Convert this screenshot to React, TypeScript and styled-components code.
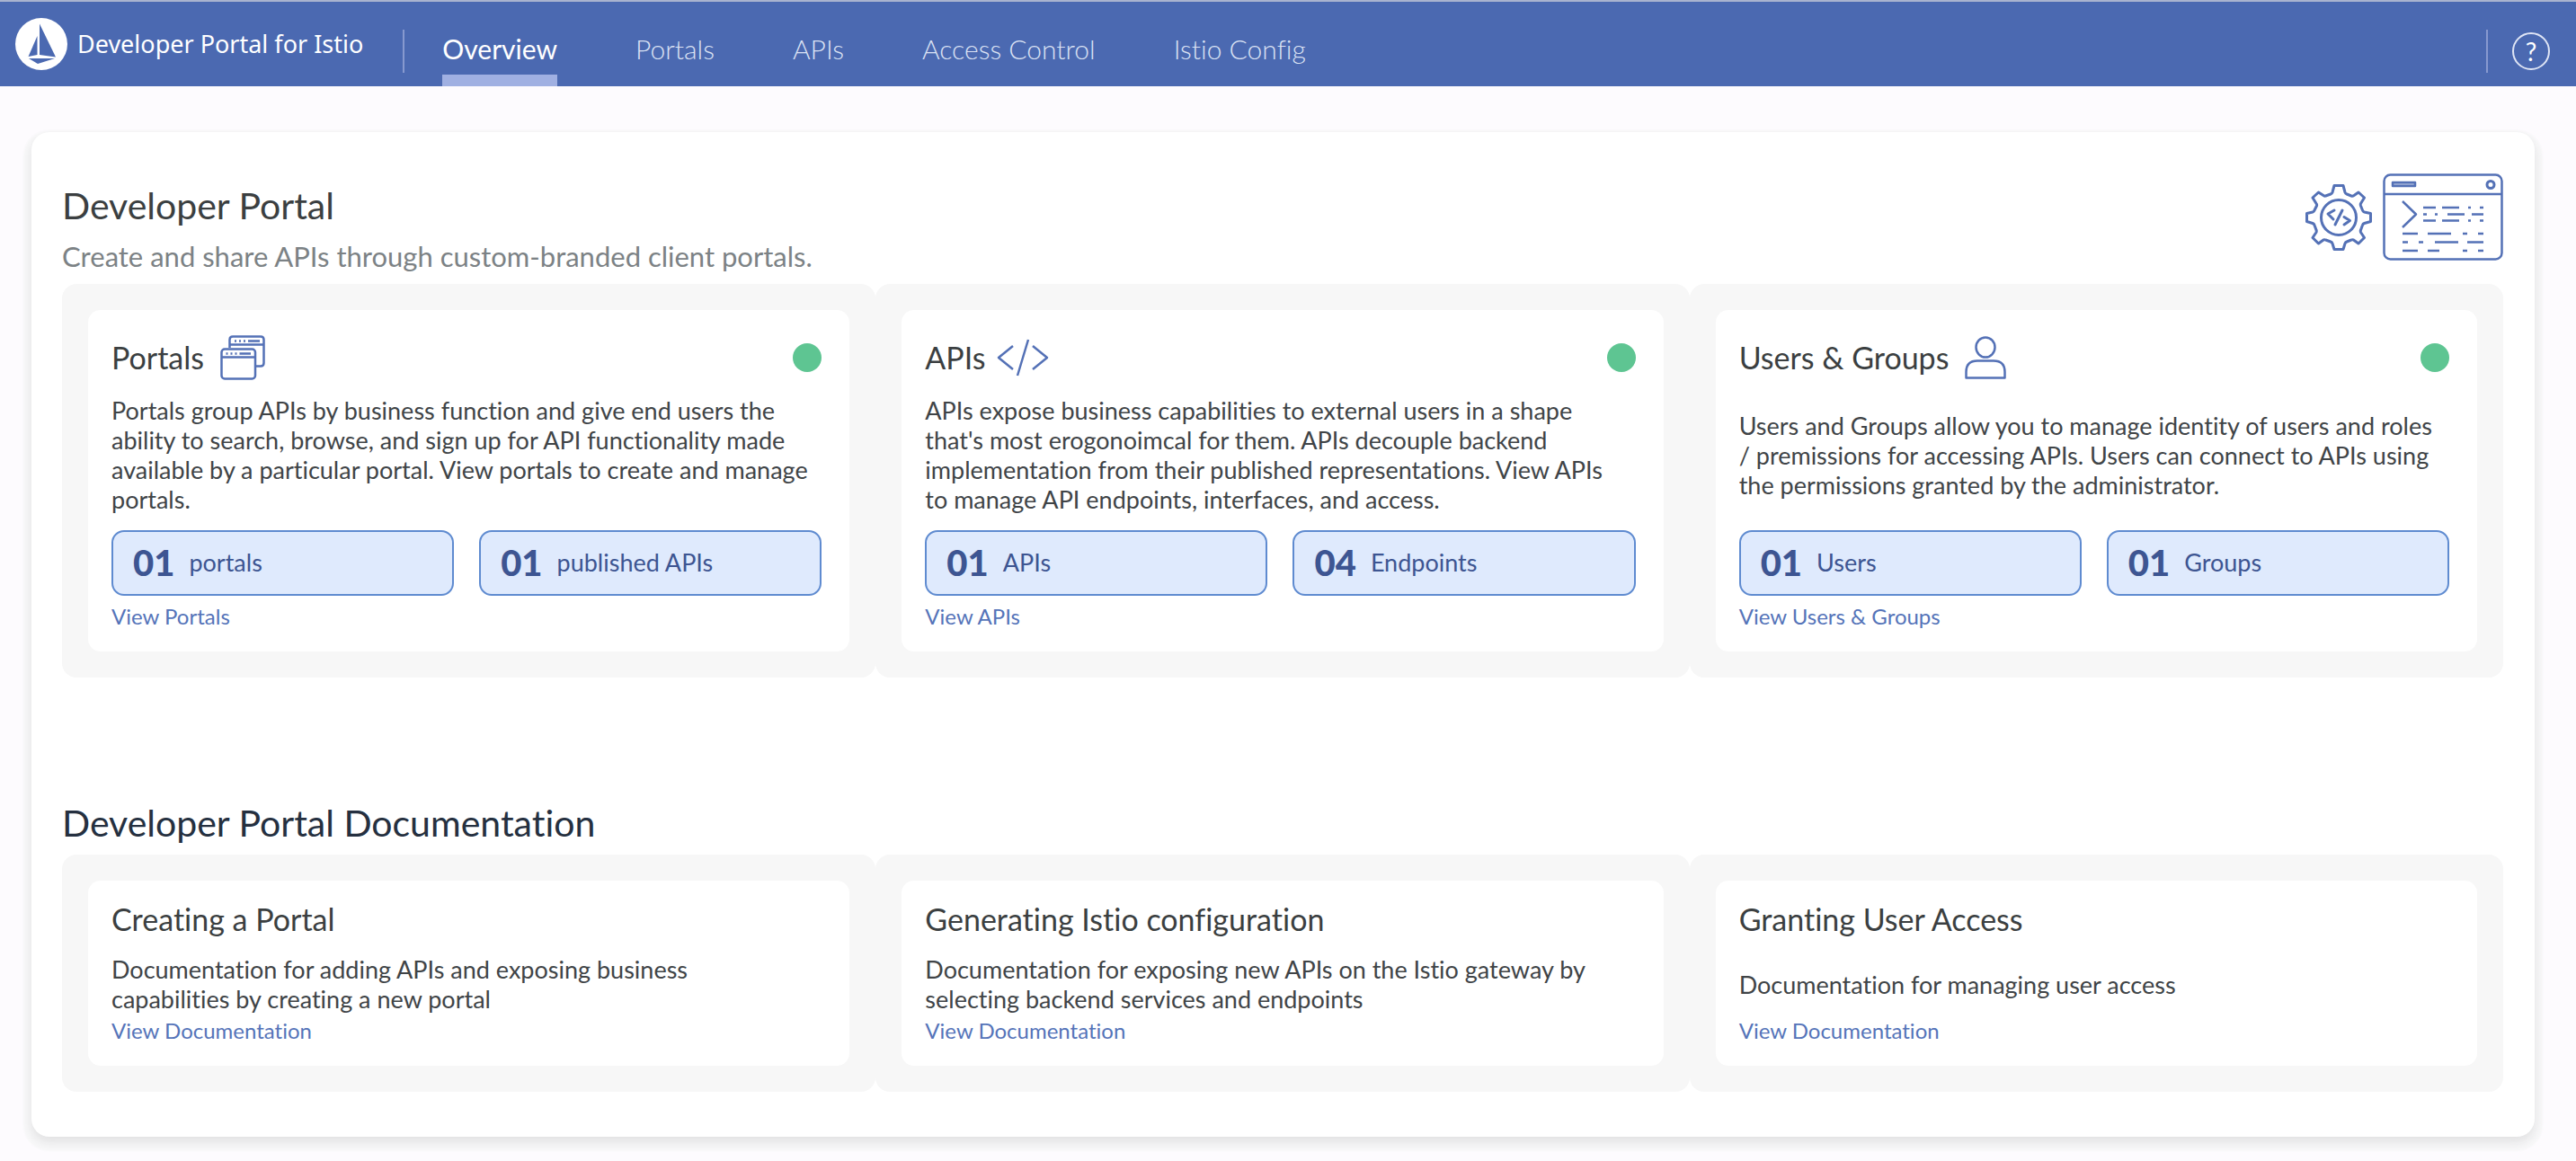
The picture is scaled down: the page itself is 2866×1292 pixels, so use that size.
import React from 'react';
import styled, { createGlobalStyle } from 'styled-components';

const blue = '#4b69b1';
const sans = `Lato, "Open Sans", "Liberation Sans", sans-serif`;

const GlobalStyle = createGlobalStyle`
  *, *::before, *::after { box-sizing: border-box; }
  body {
    margin: 0;
    background: #fdfbfe;
    color: #3b3f41;
    font-family: ${sans};
    font-variant-ligatures: none;
  }
  h1, h2, h3, p, ul { margin: 0; padding: 0; font-weight: 400; }
  ul { list-style: none; }
  a { text-decoration: none; color: inherit; }
`;

const Header = styled.header`
  display: flex;
  align-items: stretch;
  height: 96px;
  padding: 0 29px 0 17px;
  background: ${blue};
  border-top: 2px solid #a9b3cf;
  color: #fff;
`;

const Brand = styled.a`
  display: flex;
  align-items: center;
  gap: 11px;
  padding-right: 44px;
  font-family: "Noto Sans", "Open Sans", sans-serif;
  font-size: 27px;
  line-height: 40px;
  white-space: nowrap;
`;

const Divider = styled.span`
  flex: none;
  align-self: center;
  width: 2px;
  height: 48px;
  margin-top: 16px;
  background: #8799cf;
`;

const Nav = styled.nav`
  flex: 1;
  display: flex;
  gap: 87px;
  padding-left: 42px;
`;

const NavLink = styled.a<{ $active?: boolean }>`
  display: flex;
  align-items: center;
  padding-top: 22px;
  border-bottom: 13px solid ${(p) => (p.$active ? '#a0b0e2' : 'transparent')};
  font-size: 30px;
  line-height: 36px;
  font-weight: ${(p) => (p.$active ? 400 : 300)};
  color: ${(p) => (p.$active ? '#fff' : '#dbe2f4')};
  white-space: nowrap;
`;

const HelpButton = styled.button`
  align-self: center;
  width: 42px;
  height: 42px;
  margin: 16px 0 0 27px;
  padding: 0;
  border: 2px solid #dfe5f5;
  border-radius: 50%;
  background: none;
  color: #fff;
  font-family: ${sans};
  font-size: 28px;
  line-height: 36px;
`;

const Main = styled.main`
  padding: 51px 46px 28px 35px;
`;

const Panel = styled.div`
  padding: 46px 35px 50px 34px;
  border-radius: 20px;
  background: #fff;
  box-shadow: 0 6px 12px 0 rgba(30, 30, 30, 0.1), 0 7px 2px 9px #f8f8f9;
`;

const Section = styled.section`
  & + & { margin-top: 138px; }
`;

const SectionHead = styled.div`
  display: flex;
  justify-content: space-between;
  align-items: flex-start;
  padding-bottom: 14px;
`;

const Titles = styled.div`
  display: grid;
  gap: 15px;
  padding-top: 12px;
`;

const SectionTitle = styled.h1`
  font-size: 41px;
  line-height: 48px;
`;

const DocsTitle = styled.h2`
  padding-bottom: 11px;
  font-size: 41px;
  line-height: 48px;
  color: #253040;
`;

const Subtitle = styled.p`
  font-size: 31px;
  line-height: 34px;
  color: #7c8285;
`;

const Art = styled.div`
  display: flex;
  align-items: center;
  gap: 12px;
`;

const Tiles = styled.ul`
  display: grid;
  grid-template-columns: repeat(3, 1fr);
`;

const Tile = styled.li`
  display: flex;
  padding: 29px;
  border-radius: 16px;
  background: #f7f7f7;
`;

const TileCard = styled.article<{ $compact?: boolean }>`
  flex: 1;
  display: flex;
  flex-direction: column;
  padding: ${(p) => (p.$compact ? '22px 31px 23px 26px' : '28px 31px 23px 26px')};
  border-radius: 14px;
  background: #fff;
`;

const TileHead = styled.div`
  display: flex;
  align-items: center;
  justify-content: space-between;
  height: 50px;
`;

const TitleWithIcon = styled.div`
  display: flex;
  align-items: center;
`;

const TileTitle = styled.h3`
  font-size: 34px;
  line-height: 42px;
`;

const StatusDot = styled.span`
  width: 32px;
  height: 32px;
  border-radius: 50%;
  background: #5ec592;
`;

const Copy = styled.p<{ $compact?: boolean }>`
  flex: 1;
  display: flex;
  align-items: center;
  padding: ${(p) => (p.$compact ? '18px 0 3px' : '17px 0 18px')};
  font-size: 27px;
  line-height: 33px;
  color: #404447;
  white-space: pre-line;
`;

const Stats = styled.div`
  display: grid;
  grid-template-columns: 1fr 1fr;
  gap: 28px;
  margin-bottom: 7px;
`;

const Stat = styled.div`
  display: flex;
  align-items: center;
  gap: 16px;
  height: 73px;
  padding: 0 22px 2px;
  border: 2px solid #5f8bd0;
  border-radius: 14px;
  background: #dfeafd;
  color: #3d5592;
  font-size: 27px;
  line-height: 33px;
`;

const StatValue = styled.strong`
  font-size: 40px;
  line-height: 46px;
  font-weight: 900;
`;

const TileLink = styled.a`
  align-self: flex-start;
  font-size: 24px;
  line-height: 32px;
  color: #5574b9;
`;

const Icon = styled.svg<{ $gap?: number }>`
  flex: none;
  display: block;
  margin-left: ${(p) => p.$gap ?? 0}px;
  fill: none;
  stroke: #5471b6;
  stroke-width: 2.5;
  stroke-linejoin: round;
`;

const BoatLogo = () => (
  <svg width="58" height="58" viewBox="0 0 58 58" aria-hidden="true">
    <circle cx="29" cy="29" r="29" fill="#fff" />
    <path d="M24.500 20V41L14.500 43Z" fill={blue} />
    <path d="M27 6.500V41L45 43.500Z" fill={blue} />
    <path d="M15 45H44L25 51Z" fill={blue} />
  </svg>
);

const GearArt = () => (
  <Icon width="74" height="74" viewBox="0 0 74 74" aria-hidden="true" strokeLinecap="round">
    <g strokeWidth="3">
      <path d="M32 1.500H42L44 9Q44.500 10.500 46 11L51 13Q52.500 13.500 54 12.500L59 9L65.500 15L61.500 21.500Q61 22.500 61.500 24L63.500 29Q64 30.500 65.500 31L72.500 32.500V41.500L65.500 43.500Q64 44 63.500 45.500L61.500 51Q61 52 61.500 53.500L65.500 59.500L59 66L53.500 62Q52 61.500 51 62L46 64Q44.500 64.500 44 66L42 72.500H32L30 66Q29.500 64.500 28 64L22.500 62Q21.500 61.500 20 62L14.500 66L8 59.500L12 53.500Q12.500 52 12 51L10 45.500Q9.500 44 8 43.500L1.500 41.500V32.500L8 31Q9.500 30.500 10 29L12.500 24Q13 22.500 12 21.500L8 15L14.500 9L20 12.500Q21.500 13.500 22.500 13L28 11Q29.500 10.500 30 9Z" />
      <circle cx="37" cy="37" r="19.500" />
      <path d="M32 29L25 33L31 39M41 29L33 45M43 36.500L49.500 40.500L43 45" />
    </g>
  </Icon>
);

const TerminalArt = () => (
  <Icon width="134" height="97" viewBox="0 0 134 97" aria-hidden="true">
    <rect x="1.500" y="1.500" width="131" height="94" rx="7" />
    <path d="M1.500 23H132.500" />
    <rect x="11" y="10" width="25" height="4" fill="#a3b3d8" />
    <circle cx="120" cy="12.500" r="4" strokeWidth="3" />
    <path d="M22 31L37 45.500L22 60" />
    <path d="M45 38H59M66 38H85M95 38H98M108 38H112M45 45.500H49M58 45.500H61M72 45.500H91M99 45.500H112M45 52.500H59M66 52.500H85M95 52.500H98M108 52.500H112M22 67H39M50 67H76M89 67H94M106 67H112M22 76.500H28M40 76.500H45M58 76.500H84M94 76.500H112M22 86H39M50 86H63M89 86H94M106 86H112" />
  </Icon>
);

const WindowsIcon = () => (
  <Icon $gap={18} width="50" height="50" viewBox="0 0 50 50" aria-hidden="true">
    <path d="M10.500 14V5Q10.500 1.500 14 1.500H45Q48.500 1.500 48.500 5V31Q48.500 34.500 45 34.500H39M10.500 10.500H48.500" />
    <rect x="1.500" y="15.500" width="37.500" height="33" rx="3.500" />
    <path d="M1.500 24.500H39" />
    <path d="M16 6.500H18M21 6.500H23M26 6.500H28M31 6.500H44M6.500 20.500H8.500M11.500 20.500H13.500M16.500 20.500H18.500M21.500 20.500H34" />
  </Icon>
);

const CodeIcon = () => (
  <Icon $gap={12} width="58" height="42" viewBox="0 0 58 42" aria-hidden="true">
    <path d="M18 8L2 21L18 34M40 8L56 21L40 34M35 1L23 41" />
  </Icon>
);

const UserIcon = () => (
  <Icon $gap={18} width="46" height="48" viewBox="0 0 46 48" aria-hidden="true">
    <ellipse cx="23" cy="12.500" rx="10.500" ry="11" />
    <path d="M1.500 46.500V40Q1.500 27.500 14 27.500H32Q44.500 27.500 44.500 40V46.500Z" />
  </Icon>
);

const navItems = ['Overview', 'Portals', 'APIs', 'Access Control', 'Istio Config'];

const tiles = [
  {
    title: 'Portals',
    icon: <WindowsIcon />,
    copy: 'Portals group APIs by business function and give end users the ability to search, browse, and sign up for API functionality made available by a particular portal. View portals to create and manage portals.',
    stats: [['01', 'portals'], ['01', 'published APIs']],
    link: 'View Portals',
  },
  {
    title: 'APIs',
    icon: <CodeIcon />,
    copy: "APIs expose business capabilities to external users in a shape that's most erogonoimcal for them. APIs decouple backend implementation from their published representations. View APIs\nto manage API endpoints, interfaces, and access.",
    stats: [['01', 'APIs'], ['04', 'Endpoints']],
    link: 'View APIs',
  },
  {
    title: 'Users & Groups',
    icon: <UserIcon />,
    copy: 'Users and Groups allow you to manage identity of users and roles\n/ premissions for accessing APIs. Users can connect to APIs using the permissions granted by the administrator.',
    stats: [['01', 'Users'], ['01', 'Groups']],
    link: 'View Users & Groups',
  },
];

const docs = [
  { title: 'Creating a Portal', copy: 'Documentation for adding APIs and exposing business\ncapabilities by creating a new portal' },
  { title: 'Generating Istio configuration', copy: 'Documentation for exposing new APIs on the Istio gateway by selecting backend services and endpoints' },
  { title: 'Granting User Access', copy: 'Documentation for managing user access' },
];

export default function App() {
  return (
    <>
      <GlobalStyle />
      <Header>
        <Brand href="#">
          <BoatLogo />
          Developer Portal for Istio
        </Brand>
        <Divider />
        <Nav>
          {navItems.map((item, i) => (
            <NavLink key={item} href="#" $active={i === 0}>{item}</NavLink>
          ))}
        </Nav>
        <Divider />
        <HelpButton aria-label="Help">?</HelpButton>
      </Header>
      <Main>
        <Panel>
          <Section>
            <SectionHead>
              <Titles>
                <SectionTitle>Developer Portal</SectionTitle>
                <Subtitle>Create and share APIs through custom-branded client portals.</Subtitle>
              </Titles>
              <Art>
                <GearArt />
                <TerminalArt />
              </Art>
            </SectionHead>
            <Tiles>
              {tiles.map((t) => (
                <Tile key={t.title}>
                  <TileCard>
                    <TileHead>
                      <TitleWithIcon>
                        <TileTitle>{t.title}</TileTitle>
                        {t.icon}
                      </TitleWithIcon>
                      <StatusDot />
                    </TileHead>
                    <Copy>{t.copy}</Copy>
                    <Stats>
                      {t.stats.map(([value, label]) => (
                        <Stat key={label}>
                          <StatValue>{value}</StatValue>
                          {label}
                        </Stat>
                      ))}
                    </Stats>
                    <TileLink href="#">{t.link}</TileLink>
                  </TileCard>
                </Tile>
              ))}
            </Tiles>
          </Section>
          <Section>
            <DocsTitle>Developer Portal Documentation</DocsTitle>
            <Tiles>
              {docs.map((d) => (
                <Tile key={d.title}>
                  <TileCard $compact>
                    <TileTitle>{d.title}</TileTitle>
                    <Copy $compact>{d.copy}</Copy>
                    <TileLink href="#">View Documentation</TileLink>
                  </TileCard>
                </Tile>
              ))}
            </Tiles>
          </Section>
        </Panel>
      </Main>
    </>
  );
}
